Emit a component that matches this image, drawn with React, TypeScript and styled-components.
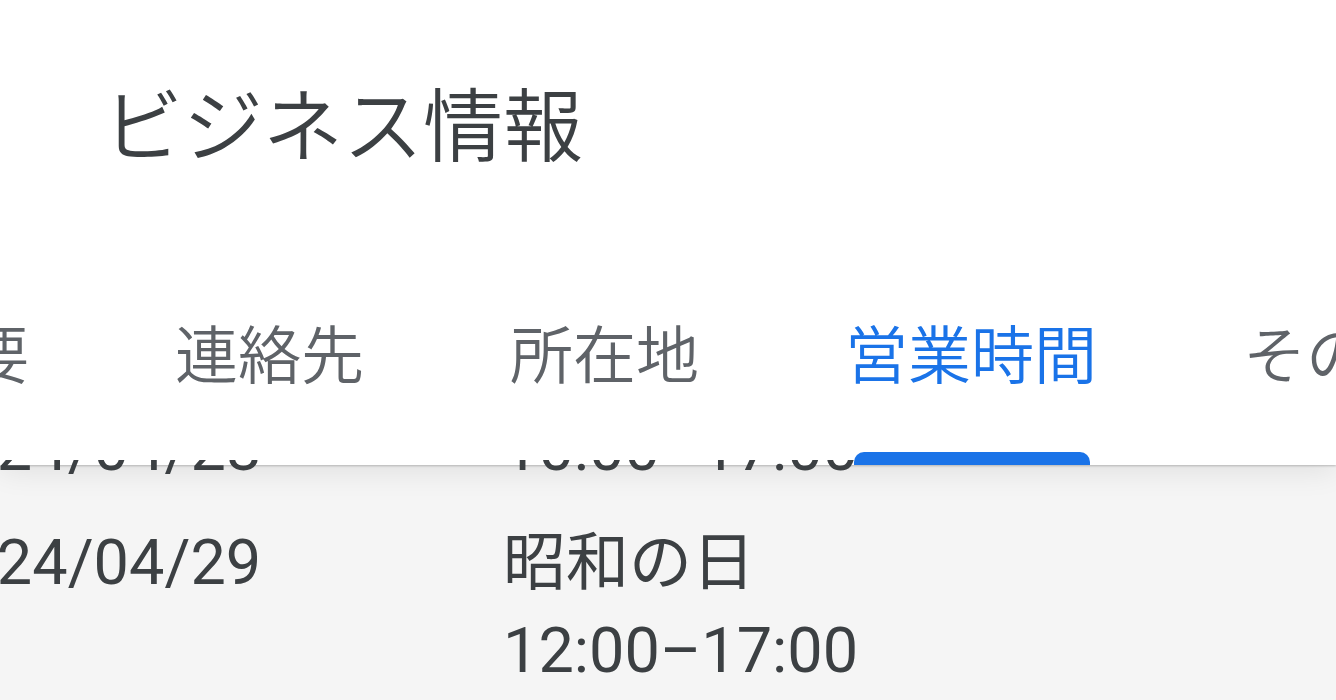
import { useLayoutEffect, useRef } from "react"
import styled, { createGlobalStyle } from "styled-components"

const GlobalStyle = createGlobalStyle`
  html, body {
    margin: 0;
    padding: 0;
    background: #f5f5f5;
    font-family: Roboto, "Noto Sans CJK JP", "Noto Sans", sans-serif;
  }
`

const Page = styled.div`
  display: flex;
  flex-direction: column;
  height: 100vh;
  overflow: hidden;
`

const Header = styled.div`
  position: relative;
  background: #fff;
  flex-shrink: 0;
  box-shadow: 0 1px 2px rgba(0, 0, 0, 0.22), 0 6px 28px rgba(0, 0, 0, 0.09);
`

const TitleBar = styled.div`
  height: 244px;
  display: flex;
  align-items: center;
  padding-left: 103px;
  padding-bottom: 4px;
  box-sizing: border-box;
`

const Title = styled.h1`
  margin: 0;
  font-family: "Noto Sans CJK JP", sans-serif;
  font-weight: 350;
  font-size: 80px;
  line-height: 1.2;
  color: #3c4043;
`

const TabScroller = styled.div`
  overflow: hidden;
  white-space: nowrap;
`

const TabList = styled.div`
  display: inline-flex;
`

const Tab = styled.div<{ $active?: boolean }>`
  position: relative;
  height: 221px;
  padding: 0 73px 8px;
  box-sizing: border-box;
  display: flex;
  align-items: center;
  font-family: "Noto Sans CJK JP", sans-serif;
  font-weight: 350;
  font-size: 63px;
  line-height: 1.2;
  color: ${p => (p.$active ? "#1a73e8" : "#5f6368")};
`

const Indicator = styled.span`
  position: absolute;
  left: 82px;
  right: 80px;
  bottom: 0;
  height: 13px;
  border-radius: 10px 10px 0 0;
  background: #1a73e8;
  z-index: 2;
`

const List = styled.div`
  position: relative;
  z-index: 1;
  flex: 1;
  min-height: 0;
  margin-top: -5px;
  overflow: hidden;
`

const Rows = styled.div`
  min-width: 1700px;
  padding-left: 24px;
`

const Row = styled.div`
  display: grid;
  grid-template-columns: 577px 1fr;
  padding: 13px 0;
  font-size: 63px;
  line-height: 88px;
  color: #3c4043;
`

const DateCell = styled.div``

const Lines = styled.div`
  display: flex;
  flex-direction: column;
`

const Line = styled.div`
  white-space: nowrap;
`

interface Hours {
  date: string,
  label?: string,
  time: string,
}

const tabs = ["概要", "連絡先", "所在地", "営業時間", "その他"]

const hours: Hours[] = [
  { date: "2024/04/27", time: "10:00–17:00" },
  { date: "2024/04/28", time: "10:00–17:00" },
  { date: "2024/04/29", label: "昭和の日", time: "12:00–17:00" },
  { date: "2024/05/03", label: "憲法記念日", time: "12:00–17:00" },
  { date: "2024/05/04", label: "みどりの日", time: "12:00–17:00" },
]

export default function App() {
  const tabRef = useRef<HTMLDivElement>(null)
  const listRef = useRef<HTMLDivElement>(null)

  useLayoutEffect(() => {
    // scrolled positions as in the screenshot
    if (tabRef.current) tabRef.current.scrollLeft = 170
    if (listRef.current) {
      listRef.current.scrollLeft = 98
      listRef.current.scrollTop = 182
    }
  }, [])

  return (
    <Page>
      <GlobalStyle />
      <Header>
        <TitleBar>
          <Title>ビジネス情報</Title>
        </TitleBar>
        <TabScroller ref={tabRef}>
          <TabList>
            {tabs.map(tab => (
              <Tab key={tab} $active={tab === "営業時間"}>
                {tab}
                {tab === "営業時間" && <Indicator />}
              </Tab>
            ))}
          </TabList>
        </TabScroller>
      </Header>
      <List ref={listRef}>
        <Rows>
          {hours.map(h => (
            <Row key={h.date}>
              <DateCell>{h.date}</DateCell>
              <Lines>
                {h.label && <Line>{h.label}</Line>}
                <Line>{h.time}</Line>
              </Lines>
            </Row>
          ))}
        </Rows>
      </List>
    </Page>
  )
}
